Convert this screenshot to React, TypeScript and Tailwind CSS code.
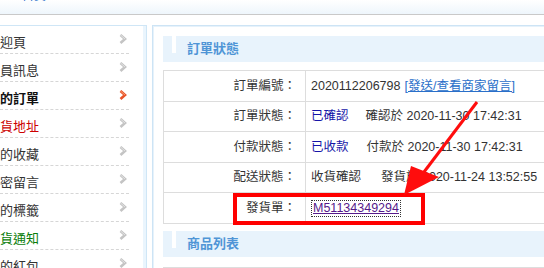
import React from "react";

const menu = [
  { label: "歡迎頁", color: "text-[#333333]" },
  { label: "會員訊息", color: "text-[#333333]" },
  { label: "我的訂單", color: "text-[#111111] font-bold", active: true },
  { label: "收貨地址", color: "text-[#cc0000]" },
  { label: "我的收藏", color: "text-[#333333]" },
  { label: "私密留言", color: "text-[#333333]" },
  { label: "我的標籤", color: "text-[#333333]" },
  { label: "到貨通知", color: "text-[#0a7d0a]" },
  { label: "我的紅包", color: "text-[#333333]" },
];

function Chevron({ active }: { active?: boolean }) {
  return (
    <svg width="8" height="10" viewBox="0 0 8 10" className="shrink-0">
      <path
        d="M1.5 1 L6 5 L1.5 9"
        fill="none"
        stroke={active ? "#e8542a" : "#c4c4c4"}
        strokeWidth="2.6"
        strokeLinejoin="miter"
      />
      <path
        d="M1.5 1 L6 5"
        fill="none"
        stroke={active ? "#f79a6e" : "#e2e2e2"}
        strokeWidth="1"
      />
    </svg>
  );
}

function SectionHeader({ title }: { title: string }) {
  return (
    <div className="flex h-[26px] bg-[#e8f3fc]">
      <div className="ml-[9px] h-[17px] w-[4px] bg-white" />
      <span className="ml-[11px] self-center text-[13px] font-bold text-[#4f95d6]">{title}</span>
    </div>
  );
}

function Row({ label, h, children }: { label: string; h: string; children: React.ReactNode }) {
  return (
    <div className={`flex border-b border-[#dddddd] ${h}`}>
      <div className="flex w-[142px] shrink-0 items-center justify-end border-r border-[#dddddd] pr-[9px] text-[#333333]">
        {label}
      </div>
      <div className="flex items-center whitespace-nowrap pl-[5px] text-[#333333]">{children}</div>
    </div>
  );
}

export default function App() {
  return (
    <div className="relative h-[268px] w-[544px] overflow-hidden bg-white font-['Liberation_Sans','Noto_Sans_CJK_TC',sans-serif] text-[12.5px]">
      {/* top breadcrumb strip */}
      <div className="h-[15px] overflow-hidden border-b border-[#c9c9c9] bg-gradient-to-b from-[#ffffff] to-[#eef6fc]">
        <div className="-mt-[11px] flex whitespace-nowrap text-[12px] leading-[14px]">
          <span className="-ml-[34px] text-[#333333]">位置：</span>
          <span className="ml-[20px] text-[#2a6fc9]">首頁</span>
        </div>
      </div>

      <div className="mt-[10px] flex">
        {/* sidebar */}
        <aside className="w-[147px] shrink-0 border-r border-t border-[#cfe6f6] shadow-[inset_-3px_0_0_#eaf5fd]">
          <ul className="mr-[17px]">
            {menu.map((m) => (
              <li
                key={m.label}
                className="flex h-[28px] items-center justify-between border-b border-dashed border-[#d6d6d6] pr-[2px]"
              >
                <span className={`-ml-[13px] mt-[6px] whitespace-nowrap text-[13px] ${m.color}`}>{m.label}</span>
                <span className="-mt-[2px]">
                  <Chevron active={m.active} />
                </span>
              </li>
            ))}
          </ul>
        </aside>

        {/* main panel */}
        <main className="ml-[5px] flex-1 border border-[#cde4f5] px-[10px] pt-[10px] shadow-[inset_1px_1px_0_#e6f2fb]">
          <SectionHeader title="訂單狀態" />
          <div className="mt-[8px] w-[400px] border-l border-t border-[#dddddd]">
            <Row label="訂單編號：" h="h-[31px]">
              <span>2020112206798</span>
              <span className="ml-[4px] text-[#2a6fc9] underline">[發送/查看商家留言]</span>
            </Row>
            <Row label="訂單狀態：" h="h-[30px]">
              <span className="text-[#1515a8]">已確認</span>
              <span className="ml-[17px]">確認於 2020-11-30 17:42:31</span>
            </Row>
            <Row label="付款狀態：" h="h-[31px]">
              <span className="text-[#1515a8]">已收款</span>
              <span className="ml-[18px]">付款於 2020-11-30 17:42:31</span>
            </Row>
            <Row label="配送狀態：" h="h-[30px]">
              <span>收貨確認</span>
              <span className="ml-[20px]">發貨於 2020-11-24 13:52:55</span>
            </Row>
            <Row label="發貨單：" h="h-[31px]">
              <span className="border border-dotted border-[#333333] px-[1px] leading-[15px] text-[#551a8b] underline">
                M51134349294
              </span>
            </Row>
          </div>
          <div className="mt-[7px]">
            <SectionHeader title="商品列表" />
          </div>
          <div className="mt-[10px] h-[20px] w-[400px] border-l border-t border-[#dddddd]" />
        </main>
      </div>

      {/* annotation overlay */}
      <div className="pointer-events-none absolute left-[233px] top-[193px] h-[32px] w-[192px] border-[4px] border-[#ff0000]" />
      <svg className="pointer-events-none absolute left-0 top-0" width="544" height="268">
        <line x1="477" y1="102" x2="424" y2="172" stroke="#ff0d0d" strokeWidth="3" />
        <polygon points="404,195 411,166 439,177" fill="#ff0d0d" />
      </svg>
    </div>
  );
}
